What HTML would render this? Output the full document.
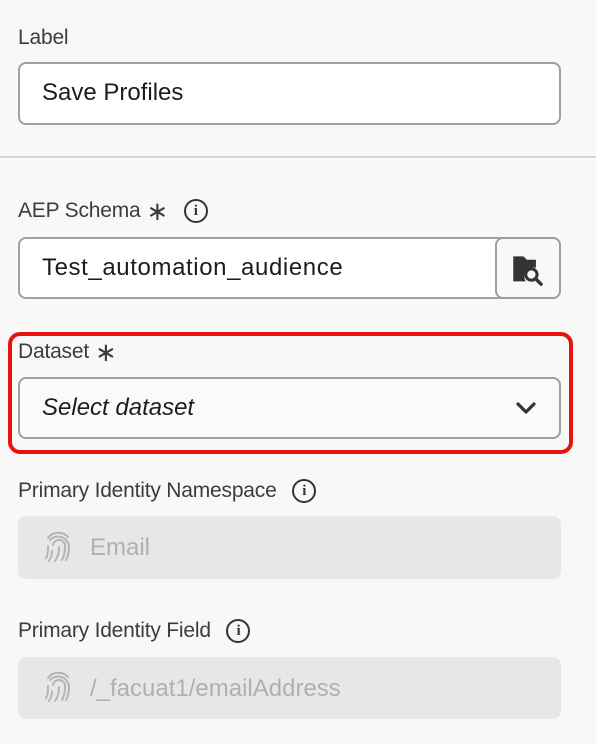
<!DOCTYPE html>
<html><head><style>
body{margin:0;width:596px;height:744px;background:#f8f8f8;font-family:"Liberation Sans",sans-serif;position:relative;overflow:hidden;color:#222}
.a{position:absolute}
.lbl{font-size:21px;color:#3c3c3c;line-height:24px;letter-spacing:-0.2px}
.inp{background:#fff;border:2px solid #a0a0a0;border-radius:8px;box-sizing:border-box;font-size:24px;line-height:58px;padding-left:22px;color:#1d1d1d}
.dis{background:#e7e7e7;border-radius:8px;font-size:24px;line-height:63px;color:#b0b0b0;padding-left:72px;box-sizing:border-box}
.info{display:inline-block;width:24px;height:24px;border:2px solid #333;border-radius:50%;box-sizing:border-box;font:bold 15px "Liberation Serif",serif;text-align:center;line-height:20px;color:#333;vertical-align:middle}
.ast{font-size:26px;vertical-align:middle;margin-left:6px}
</style></head><body>
<div class="a lbl" style="left:18px;top:26px">Label</div>
<div class="a inp" style="left:18px;top:62px;width:543px;height:63px">Save Profiles</div>
<div class="a" style="left:0;top:156px;width:596px;height:2px;background:#d5d5d5"></div>
<div class="a lbl" style="left:18px;top:199px">AEP Schema<span class="ast">∗</span> <span class="info" style="margin-left:10px">i</span></div>
<div class="a inp" style="left:18px;top:237px;width:543px;height:62px;letter-spacing:0.6px">Test_automation_audience</div>
<div class="a" style="left:495px;top:237px;width:66px;height:62px;border:2px solid #a0a0a0;border-radius:8px;box-sizing:border-box;background:#f8f8f8">
<svg class="a" style="left:14px;top:14px" width="34" height="34" viewBox="0 0 30 30"><path d="M2 3h9l3 3h8v7a8 8 0 0 0-9 12H2z" fill="#333"/><circle cx="18" cy="19" r="5" fill="none" stroke="#333" stroke-width="2.6"/><path d="M21.5 22.5l5 5" stroke="#333" stroke-width="3" stroke-linecap="round"/></svg></div>
<div class="a" style="left:8px;top:332px;width:565px;height:122px;border:4px solid #e8130d;border-radius:12px;box-sizing:border-box"></div>
<div class="a lbl" style="left:18px;top:340px">Dataset<span class="ast">∗</span></div>
<div class="a inp" style="left:18px;top:377px;width:543px;height:62px;background:#fafafa;font-style:italic">Select dataset</div>
<svg class="a" style="left:514px;top:398px" width="24" height="20" viewBox="0 0 24 20"><path d="M4 6l8 8 8-8" fill="none" stroke="#333" stroke-width="3.2" stroke-linecap="round" stroke-linejoin="round"/></svg>
<div class="a lbl" style="left:18px;top:479px">Primary Identity Namespace <span class="info" style="margin-left:10px">i</span></div>
<div class="a dis" style="left:18px;top:516px;width:543px;height:63px">Email</div>
<div class="a lbl" style="left:18px;top:619px">Primary Identity Field <span class="info" style="margin-left:10px">i</span></div>
<div class="a dis" style="left:18px;top:657px;width:543px;height:62px">/_facuat1/emailAddress</div>
<svg class="a" style="left:44px;top:531px" width="30" height="34" viewBox="0 0 30 32"><g fill="none" stroke="#b5b5b5" stroke-width="2" stroke-linecap="round"><path d="M6 8a11 11 0 0 1 19 7c0 5-1 9-3 13"/><path d="M4 14c0 5 0 9-2 12"/><path d="M9 13a6 6 0 0 1 12 2c0 5-1 9-3 13"/><path d="M8 19c0 4-1 7-3 10"/><path d="M15 15c0 6-1 10-4 14"/><path d="M4 6a13 13 0 0 1 20-1"/></g></svg>
<svg class="a" style="left:44px;top:671px" width="30" height="34" viewBox="0 0 30 32"><g fill="none" stroke="#b5b5b5" stroke-width="2" stroke-linecap="round"><path d="M6 8a11 11 0 0 1 19 7c0 5-1 9-3 13"/><path d="M4 14c0 5 0 9-2 12"/><path d="M9 13a6 6 0 0 1 12 2c0 5-1 9-3 13"/><path d="M8 19c0 4-1 7-3 10"/><path d="M15 15c0 6-1 10-4 14"/><path d="M4 6a13 13 0 0 1 20-1"/></g></svg>
</body></html>
